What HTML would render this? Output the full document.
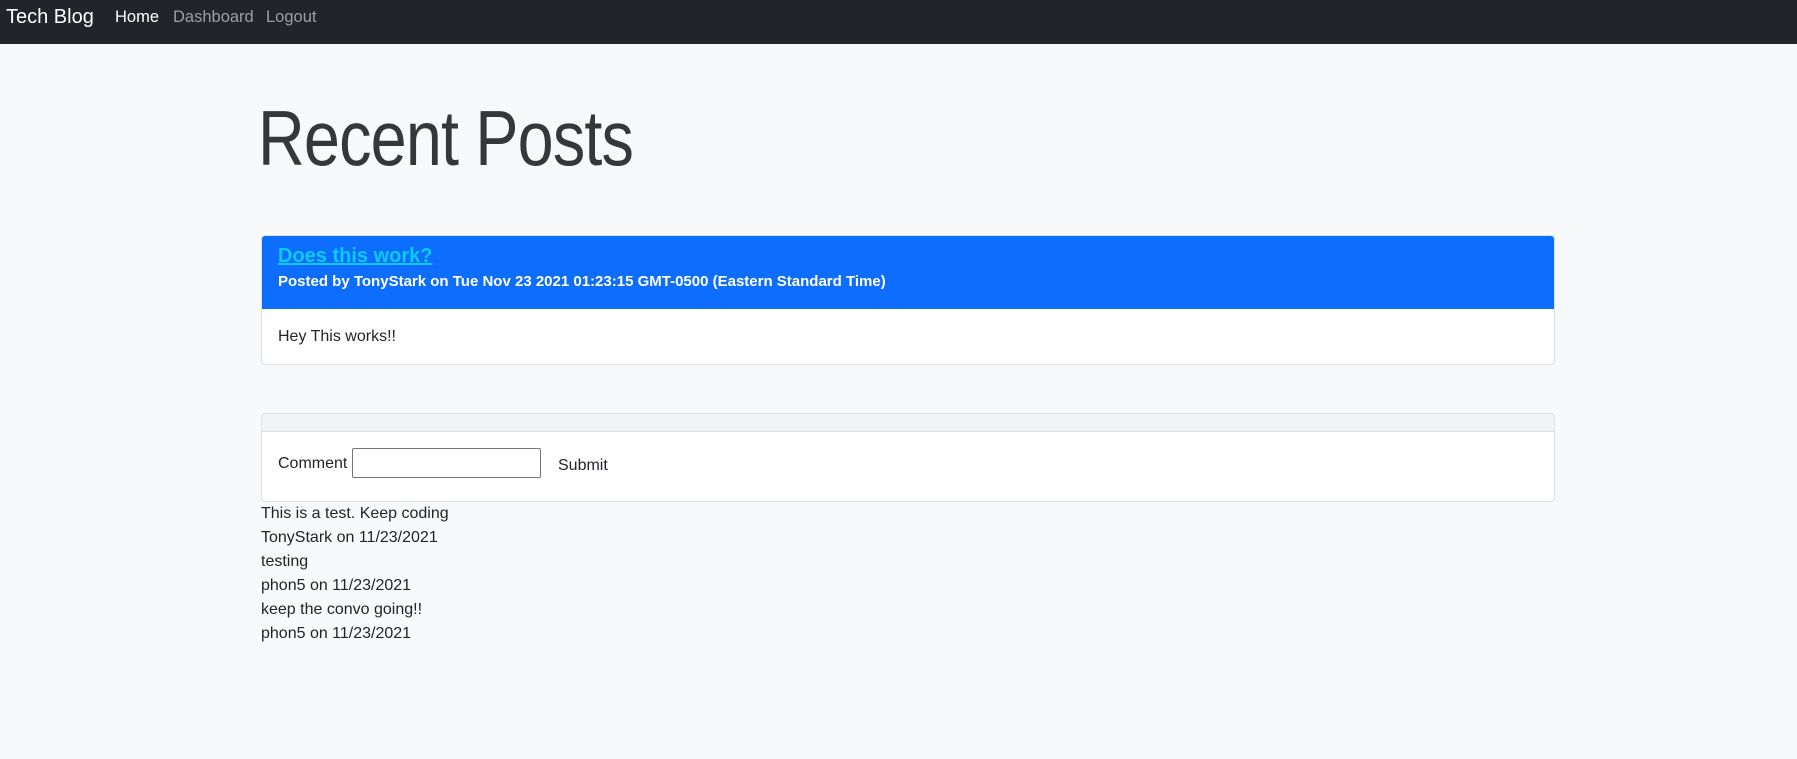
<!DOCTYPE html>
<html><head><style>
body{margin:0;background:#f8f9fa;font-family:"Liberation Sans",sans-serif;color:#212529;font-size:16px;width:1797px;height:759px;overflow:hidden;position:relative}
.nav{position:absolute;left:0;top:0;width:1797px;height:44px;background:#212529}
.nav span{position:absolute;top:0;line-height:34px;font-size:16.5px;color:rgba(255,255,255,.55)}
.brand{left:6px;color:#fff!important;font-size:20px!important}
h1{position:absolute;left:258px;top:92px;margin:0;font-size:78px;font-weight:300;line-height:1.2;letter-spacing:-1px;transform:scaleX(0.83);transform-origin:0 0;color:#35383b;-webkit-text-stroke:0}
.card{position:absolute;left:261px;width:1294px;border:1px solid #dfe1e4;border-radius:4px;background:#fff;box-sizing:border-box;overflow:hidden}
.hd{background:#0d6efd;color:#fff;padding:0 16px;height:73px;box-sizing:border-box}
.hd a{display:block;color:#0dcaf0;font-size:20px;font-weight:bold;padding-top:7px;line-height:26px;text-decoration:underline}
.hd b{display:block;font-size:15px;line-height:26px}
.bd{padding:0 16px;line-height:56px}
.hd2{height:17px;background:#f2f3f4;border-bottom:1px solid #dfe1e4}
.cm{position:absolute;left:261px;line-height:24px}
input{position:absolute;left:90px;top:34px;width:189px;height:30px;box-sizing:border-box;border:1px solid #767676;border-radius:2px;background:#fff}
</style></head><body>
<div class="nav"><span class="brand">Tech Blog</span><span style="left:115px;color:#fff">Home</span><span style="left:173px">Dashboard</span><span style="left:266px">Logout</span></div>
<h1>Recent Posts</h1>
<div class="card" style="top:235px;height:130px"><div class="hd"><a>Does this work?</a><b>Posted by TonyStark on Tue Nov 23 2021 01:23:15 GMT-0500 (Eastern Standard Time)</b></div><div class="bd">Hey This works!!</div></div>
<div class="card" style="top:413px;height:89px"><div class="hd2"></div>
<span style="position:absolute;left:16px;top:41px">Comment</span><input><span style="position:absolute;left:296px;top:43px">Submit</span></div>
<div class="cm" style="top:502px">This is a test. Keep coding<br>TonyStark on 11/23/2021<br>testing<br>phon5 on 11/23/2021<br>keep the convo going!!<br>phon5 on 11/23/2021</div>
</body></html>
